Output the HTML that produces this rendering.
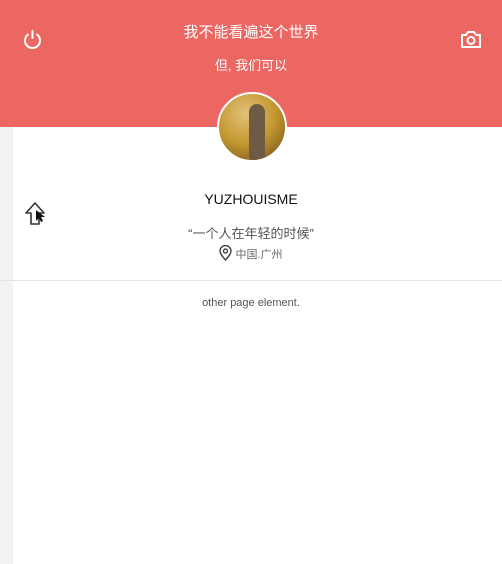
<!DOCTYPE html>
<html><head><meta charset="utf-8"><style>
html,body{margin:0;padding:0;width:502px;height:564px;overflow:hidden;background:#fff;font-family:"Liberation Sans","Noto Sans CJK SC",sans-serif;}
.hdr{position:absolute;left:0;top:0;width:502px;height:127px;background:#ec6762;}
.strip{position:absolute;left:0;top:127px;width:13px;height:437px;background:#f2f2f2;}
.t1{position:absolute;top:21px;left:0;width:502px;text-align:center;color:#fff;font-size:15px;}
.t2{position:absolute;top:55px;left:0;width:502px;text-align:center;color:#fff;font-size:13px;}
.av{position:absolute;left:217px;top:92px;width:66px;height:66px;border-radius:50%;border:2px solid #fff;overflow:hidden;background:radial-gradient(circle at 40% 30%,#e2c27a,#c3962e 50%,#6d4a1a 100%);}
.cat{position:absolute;left:30px;top:10px;width:16px;height:56px;background:#6e5a45;border-radius:8px 8px 3px 3px;}
.name{position:absolute;top:191px;left:0;width:502px;text-align:center;font-size:14px;color:#111;}
.q{position:absolute;top:223px;left:0;width:502px;text-align:center;font-size:13px;color:#555;}
.loc{position:absolute;top:245px;left:0;width:502px;text-align:center;font-size:11px;color:#666;}
.line{position:absolute;top:280px;left:0;width:502px;height:1px;background:#e3e3e3;}
.o{position:absolute;top:297px;left:0;width:502px;text-align:center;font-size:11px;color:#555;}
</style></head><body>
<div class="hdr"></div>
<div class="strip"></div>
<svg style="position:absolute;left:22px;top:29px" width="21" height="21" viewBox="0 0 21 21"><path d="M6 5.5A7.5 7.5 0 1 0 15 5.5" fill="none" stroke="#fff" stroke-width="2" stroke-linecap="round"/><line x1="10.5" y1="2" x2="10.5" y2="9" stroke="#fff" stroke-width="2" stroke-linecap="round"/></svg>
<svg style="position:absolute;left:460px;top:30px" width="22" height="19" viewBox="0 0 22 19"><path d="M2 5h4l2-3h6l2 3h4v12H2z" fill="none" stroke="#fff" stroke-width="2" stroke-linejoin="round"/><circle cx="11" cy="10.5" r="3.5" fill="none" stroke="#fff" stroke-width="2"/></svg>
<div class="t1">我不能看遍这个世界</div>
<div class="t2">但, 我们可以</div>
<div class="av"><div class="cat"></div></div>
<div class="name">YUZHOUISME</div>
<svg style="position:absolute;left:24px;top:201px" width="22" height="26" viewBox="0 0 22 26"><path d="M11 2L2 12h5v11h8V12h5z" fill="#fff" stroke="#333" stroke-width="1.6" stroke-linejoin="round"/><path d="M12 9v11l3-3 2 4 2-1-2-4h4z" fill="#111"/></svg>
<div class="q">“一个人在年轻的时候”</div>
<div class="loc"><svg width="13" height="16" viewBox="0 0 13 16" style="vertical-align:-3px"><path d="M6.5 15C3 11 1 8.5 1 6a5.5 5.5 0 0 1 11 0c0 2.5-2 5-5.5 9z" fill="none" stroke="#444" stroke-width="1.4"/><circle cx="6.5" cy="6" r="2" fill="none" stroke="#444" stroke-width="1.4"/></svg> 中国.广州</div>
<div class="line"></div>
<div class="o">other page element.</div>
</body></html>
